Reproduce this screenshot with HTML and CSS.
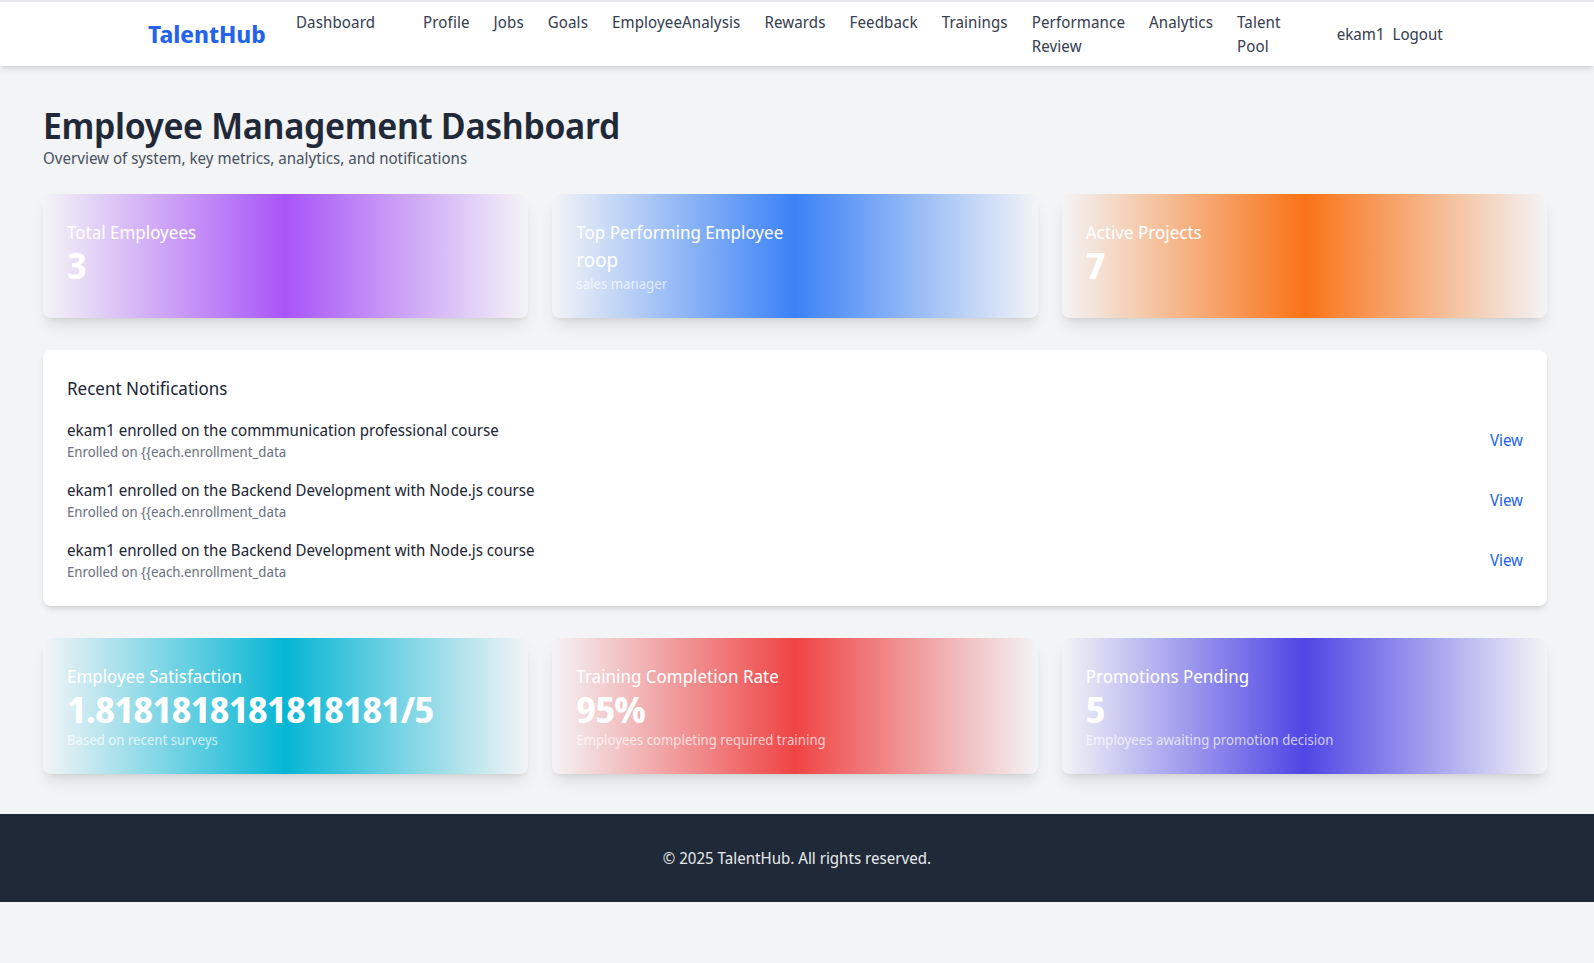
FILE: index.html
```html
<!DOCTYPE html>
<html lang="en">
<head>
<meta charset="utf-8">
<title>TalentHub - Dashboard</title>
<link rel="stylesheet" href="styles.css">
</head>
<body>
<nav class="navbar">
  <div class="nav-inner">
    <a class="logo" href="#">TalentHub</a>
    <ul class="nav-links">
      <li><a href="#">Dashboard</a></li>
      <li class="spacer"></li>
      <li><a href="#">Profile</a></li>
      <li><a href="#">Jobs</a></li>
      <li><a href="#">Goals</a></li>
      <li><a href="#">EmployeeAnalysis</a></li>
      <li><a href="#">Rewards</a></li>
      <li><a href="#">Feedback</a></li>
      <li><a href="#">Trainings</a></li>
      <li class="wrap"><a href="#">Performance Review</a></li>
      <li><a href="#">Analytics</a></li>
      <li class="wrap"><a href="#">Talent Pool</a></li>
    </ul>
    <div class="nav-user">
      <span>ekam1</span>
      <a href="#">Logout</a>
    </div>
  </div>
</nav>

<main class="main">
  <header class="page-header">
    <h1 class="page-title">Employee Management Dashboard</h1>
    <p class="page-subtitle">Overview of system, key metrics, analytics, and notifications</p>
  </header>

  <section class="stat-grid">
    <div class="stat-card grad-purple">
      <h2 class="stat-label">Total Employees</h2>
      <p class="stat-value">3</p>
    </div>
    <div class="stat-card grad-blue">
      <h2 class="stat-label">Top Performing Employee</h2>
      <p class="stat-name">roop</p>
      <p class="stat-note">sales manager</p>
    </div>
    <div class="stat-card grad-orange">
      <h2 class="stat-label">Active Projects</h2>
      <p class="stat-value">7</p>
    </div>
  </section>

  <section class="notif-card">
    <h2 class="notif-title">Recent Notifications</h2>
    <ul class="notif-list">
      <li class="notif-item">
        <div>
          <p class="notif-text">ekam1 enrolled on the commmunication professional course</p>
          <p class="notif-date">Enrolled on {{each.enrollment_data</p>
        </div>
        <a class="notif-link" href="#">View</a>
      </li>
      <li class="notif-item">
        <div>
          <p class="notif-text">ekam1 enrolled on the Backend Development with Node.js course</p>
          <p class="notif-date">Enrolled on {{each.enrollment_data</p>
        </div>
        <a class="notif-link" href="#">View</a>
      </li>
      <li class="notif-item">
        <div>
          <p class="notif-text">ekam1 enrolled on the Backend Development with Node.js course</p>
          <p class="notif-date">Enrolled on {{each.enrollment_data</p>
        </div>
        <a class="notif-link" href="#">View</a>
      </li>
    </ul>
  </section>

  <section class="stat-grid">
    <div class="stat-card grad-cyan">
      <h2 class="stat-label">Employee Satisfaction</h2>
      <p class="stat-value">1.8181818181818181/5</p>
      <p class="stat-note">Based on recent surveys</p>
    </div>
    <div class="stat-card grad-red">
      <h2 class="stat-label">Training Completion Rate</h2>
      <p class="stat-value">95%</p>
      <p class="stat-note">Employees completing required training</p>
    </div>
    <div class="stat-card grad-indigo">
      <h2 class="stat-label">Promotions Pending</h2>
      <p class="stat-value">5</p>
      <p class="stat-note">Employees awaiting promotion decision</p>
    </div>
  </section>
</main>

<footer class="footer">
  <p>© 2025 TalentHub. All rights reserved.</p>
</footer>
</body>
</html>
```
FILE: styles.css
```css
* { box-sizing: border-box; }

html, body {
  margin: 0;
  padding: 0;
}

body {
  background: #f3f4f6;
  font-family: "Noto Sans Display", "Noto Sans", sans-serif;
  font-size: 16px;
  line-height: 24px;
  color: #1f2937;
  min-height: 100vh;
}

a { text-decoration: none; color: inherit; }
p, h1, h2, ul { margin: 0; padding: 0; }
ul { list-style: none; }

/* ---------- Navbar ---------- */
.navbar {
  background: #ffffff;
  border-top: 2px solid #e5e7eb;
  box-shadow: 0 4px 6px -1px rgba(0, 0, 0, 0.1), 0 2px 4px -2px rgba(0, 0, 0, 0.1);
  position: relative;
  z-index: 2;
}

.nav-inner {
  display: flex;
  align-items: center;
  height: 64px;
  padding-left: 148px;
}

.logo {
  width: 148px;
  flex: none;
  font-size: 24px;
  line-height: 32px;
  font-weight: 700;
  color: #2563eb;
}

.nav-links {
  display: flex;
  align-items: flex-start;
  gap: 24px;
  color: #374151;
  letter-spacing: 0.1px;
}

.nav-links li { flex: none; }
.nav-links .wrap { width: min-content; }
.nav-links .spacer { width: 0; }

.nav-user {
  display: flex;
  gap: 8px;
  margin-left: 56px;
  color: #374151;
}

/* ---------- Main ---------- */
.main {
  padding: 40px 47px 40px 43px;
}

.page-title {
  font-size: 36px;
  line-height: 40px;
  font-weight: 600;
  letter-spacing: -0.3px;
  color: #1f2937;
}

.page-subtitle {
  color: #4b5563;
}

.stat-grid {
  display: grid;
  grid-template-columns: repeat(3, 1fr);
  gap: 24px;
  margin-top: 24px;
  margin-bottom: 32px;
}

.notif-card + .stat-grid { margin-top: 0; margin-bottom: 0; }

.stat-card {
  border-radius: 8px;
  padding: 24px;
  color: #ffffff;
  box-shadow: 0 10px 15px -3px rgba(0, 0, 0, 0.1), 0 4px 6px -4px rgba(0, 0, 0, 0.1);
}

.grad-purple { background: linear-gradient(to right, rgba(168, 85, 247, 0), #a855f7, rgba(168, 85, 247, 0)); }
.grad-blue   { background: linear-gradient(to right, rgba(59, 130, 246, 0), #3b82f6, rgba(59, 130, 246, 0)); }
.grad-orange { background: linear-gradient(to right, rgba(249, 115, 22, 0), #f97316, rgba(249, 115, 22, 0)); }
.grad-cyan   { background: linear-gradient(to right, rgba(6, 182, 212, 0), #06b6d4, rgba(6, 182, 212, 0)); }
.grad-red    { background: linear-gradient(to right, rgba(239, 68, 68, 0), #ef4444, rgba(239, 68, 68, 0)); }
.grad-indigo { background: linear-gradient(to right, rgba(79, 70, 229, 0), #4f46e5, rgba(79, 70, 229, 0)); }

.stat-label {
  font-size: 18px;
  line-height: 28px;
  font-weight: 400;
}

.stat-value {
  font-size: 36px;
  line-height: 40px;
  font-weight: 700;
  letter-spacing: -0.5px;
}

.stat-name {
  font-size: 20px;
  line-height: 28px;
}

.stat-note {
  font-size: 14px;
  line-height: 20px;
  color: rgba(255, 255, 255, 0.7);
}

/* ---------- Notifications ---------- */
.notif-card {
  background: #ffffff;
  border-radius: 8px;
  padding: 24px;
  margin-bottom: 32px;
  box-shadow: 0 4px 6px -1px rgba(0, 0, 0, 0.1), 0 2px 4px -2px rgba(0, 0, 0, 0.1);
}

.notif-title {
  font-size: 18px;
  line-height: 28px;
  font-weight: 400;
  color: #1f2937;
  margin-bottom: 16px;
}

.notif-list {
  display: flex;
  flex-direction: column;
  gap: 16px;
}

.notif-item {
  display: flex;
  justify-content: space-between;
  align-items: center;
}

.notif-text { color: #1f2937; }

.notif-date {
  font-size: 14px;
  line-height: 20px;
  color: #6b7280;
}

.notif-link { color: #2563eb; }

/* ---------- Footer ---------- */
.footer {
  background: #1f2937;
  color: #e5e7eb;
  text-align: center;
  padding: 32px 0;
}
```
